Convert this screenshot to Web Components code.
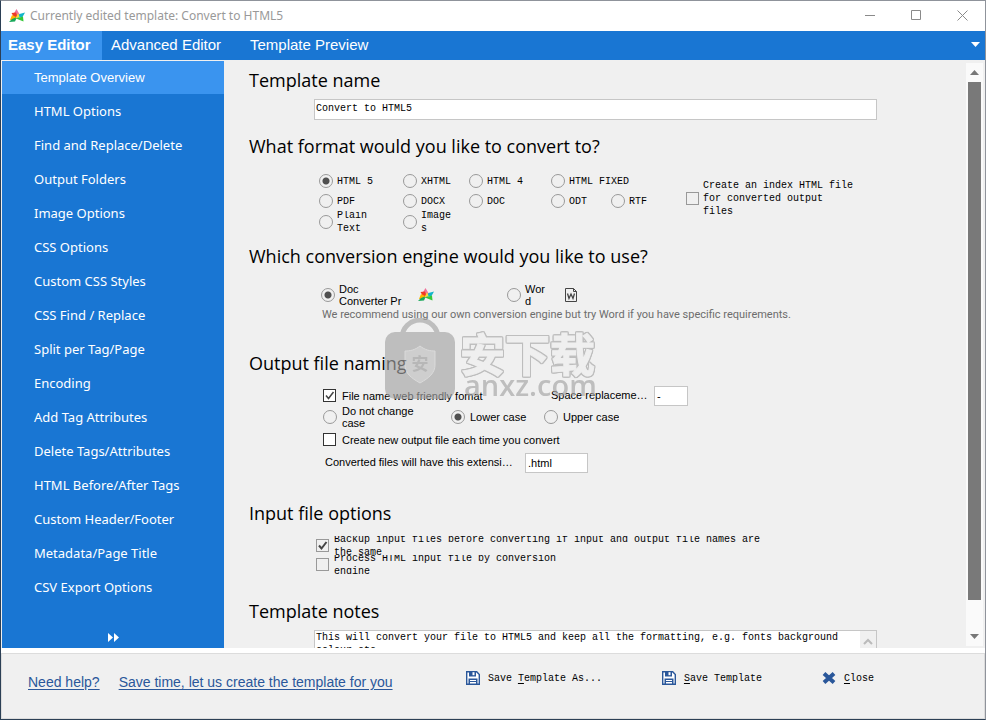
<!DOCTYPE html>
<html lang="en">
<head>
<meta charset="utf-8">
<meta name="viewport" content="width=device-width, initial-scale=1">
<title>Currently edited template: Convert to HTML5</title>
<style>
  html, body {
    height: 100%;
    margin: 0;
  }

  body {
    --color-blue: #1976d3;
    --color-blue-light: #3a94ef;
    --color-pane: #f0f0f0;
    --color-line: #c6c6c6;
    --font-ui: "Liberation Sans", Arial, sans-serif;
    --font-heading: "Open Sans", "Noto Sans", sans-serif;
    --font-nav: "Noto Sans", "Open Sans", sans-serif;
    --font-hint: Roboto, "Liberation Sans", sans-serif;
    --font-mono: "Liberation Mono", "Courier New", monospace;
    font-family: var(--font-ui);
    font-size: 11px;
    color: #000;
  }
</style>
</head>
<body>
<editor-window>
  <title-bar slot="title">Currently edited template: Convert to HTML5</title-bar>
  <tab-bar slot="tabs"></tab-bar>
  <side-nav slot="nav"></side-nav>
  <template-form slot="form"></template-form>
  <water-mark slot="overlay"></water-mark>
  <action-bar slot="footer"></action-bar>
</editor-window>

<script>
  function attach(element, html) {
    const template = document.createElement('template');
    template.innerHTML = html;
    element.attachShadow({ mode: 'open' }).appendChild(template.content.cloneNode(true));
  }

  class EditorWindow extends HTMLElement {
    constructor() {
      super();
      attach(this, `
        <style>
        :host {
          display: flex;
          flex-direction: column;
          box-sizing: border-box;
          height: 100vh;
          position: relative;
          overflow: hidden;
          background-color: #fff;
          border: 1px solid #2b3f55;
          border-top-color: #8f939b;
          border-right-color: #8f939b;
        }

        .main {
          display: flex;
          flex: 1;
          min-height: 0;
          padding: 1px 0 0 1px;
          margin-bottom: 5px;
          background-color: var(--color-pane);
        }
        </style>
        <slot name="title"></slot>
        <slot name="tabs"></slot>
        <div class="main">
          <slot name="nav"></slot>
          <slot name="form"></slot>
        </div>
        <slot name="footer"></slot>
        <slot name="overlay"></slot>
      `);
    }
  }

  class LogoMark extends HTMLElement {
    constructor() {
      super();
      attach(this, `
        <style>
        :host {
          display: block;
          flex: none;
          width: 16px;
          height: 14px;
        }

        svg {
          display: block;
        }
        </style>
        <svg width="16" height="14" viewBox="0 0 16 14" aria-hidden="true">
          <path d="M7.500 0 11 6 8 9 4.500 5z" fill="#f0709a"/>
          <path d="M2.500 4 7 3.500 9 9l-3 1z" fill="#ef3b24"/>
          <path d="M3 6 8 8.500 5.500 11 1 11z" fill="#ffb400"/>
          <path d="M0 13 3 10l5-2-2 4.500z" fill="#18a85a"/>
          <path d="M8 9 10.500 5 16 3.500 13.500 8z" fill="#12b5c9"/>
          <path d="M6.500 9.500 9 4 10.500 8z" fill="#f4e03a"/>
          <path d="M7 9.500 14 7.500 14.500 12.500z" fill="#35c838"/>
        </svg>
      `);
    }
  }

  class TitleBar extends HTMLElement {
    constructor() {
      super();
      attach(this, `
        <style>
        :host {
          display: flex;
          align-items: center;
          height: 30px;
          flex: none;
          padding-left: 8px;
          background-color: #fff;
          color: #999;
          font-family: var(--font-nav);
          font-size: 12px;
        }

        h1 {
          flex: 1;
          margin: 0 0 2px 5px;
          font: inherit;
        }

        button {
          width: 46px;
          height: 30px;
          padding: 0 0 2px;
          border: 0;
          background: none;
        }

        button:hover {
          background-color: #e5e5e5;
        }

        svg {
          display: block;
          margin: 0 auto;
          fill: none;
          stroke: #8a8a8a;
        }
        </style>
        <logo-mark></logo-mark>
        <h1><slot></slot></h1>
        <button aria-label="Minimize"><svg width="11" height="11"><path d="M0 5.500h10"/></svg></button>
        <button aria-label="Maximize"><svg width="11" height="11"><path d="M.5.5h9v9h-9z"/></svg></button>
        <button aria-label="Close window"><svg width="11" height="11"><path d="M.5.5l10 10M10.500.5l-10 10"/></svg></button>
      `);
    }
  }

  class TabBar extends HTMLElement {
    constructor() {
      super();
      attach(this, `
        <style>
        :host {
          display: flex;
          flex: none;
          height: 29px;
          background-color: var(--color-blue);
        }

        button {
          box-sizing: border-box;
          padding: 0 9px 2px;
          border: 0;
          background: none;
          color: #fff;
          font-family: var(--font-ui);
          font-size: 15px;
          text-align: left;
        }

        .selected {
          width: 101px;
          padding-left: 7px;
          background-color: var(--color-blue-light);
          font-weight: bold;
        }

        .advanced {
          width: 139px;
        }

        .more {
          display: flex;
          align-items: center;
          margin-left: auto;
          padding: 0 5px 2px;
        }
        </style>
        <button class="selected">Easy Editor</button>
        <button class="advanced">Advanced Editor</button>
        <button>Template Preview</button>
        <button class="more" aria-label="More tabs"><svg width="9" height="5"><path d="M0 0h9L4.500 5z" fill="#fff"/></svg></button>
      `);
    }
  }

  class SideNav extends HTMLElement {
    constructor() {
      super();
      const items = [
        'Template Overview', 'HTML Options', 'Find and Replace/Delete', 'Output Folders',
        'Image Options', 'CSS Options', 'Custom CSS Styles', 'CSS Find / Replace',
        'Split per Tag/Page', 'Encoding', 'Add Tag Attributes', 'Delete Tags/Attributes',
        'HTML Before/After Tags', 'Custom Header/Footer', 'Metadata/Page Title', 'CSV Export Options'
      ];
      attach(this, `
        <style>
        :host {
          display: flex;
          flex-direction: column;
          flex: none;
          width: 222px;
          background-color: var(--color-blue);
          font-family: var(--font-nav);
          font-size: 13px;
        }

        nav {
          flex: 1;
          min-height: 0;
          overflow: hidden;
        }

        a {
          display: block;
          height: 34px;
          line-height: 34px;
          padding-left: 32px;
          color: #fff;
          text-decoration: none;
        }

        a:first-child {
          height: 33px;
          line-height: 33px;
          background-color: var(--color-blue-light);
          font-family: var(--font-ui);
        }

        button {
          height: 22px;
          padding: 0;
          border: 0;
          background: none;
        }

        svg {
          display: block;
          margin: 0 auto;
        }
        </style>
        <nav>${items.map((item) => `<a href="#">${item}</a>`).join('')}</nav>
        <button aria-label="Expand"><svg width="11" height="9"><path d="M0 0l5 4.500L0 9zM6 0l5 4.500L6 9z" fill="#fff"/></svg></button>
      `);
    }
  }

  // A radio button or tick box with its label; long labels are clipped to the row.
  class ChoiceField extends HTMLElement {
    constructor() {
      super();
      const type = this.getAttribute('type') || 'radio';
      attach(this, `
        <style>
        :host {
          display: block;
          overflow: hidden;
        }

        label {
          display: flex;
          align-items: center;
          gap: var(--gap, 4px);
          height: 100%;
        }

        input {
          appearance: none;
          box-sizing: border-box;
          flex: none;
          width: 14px;
          height: 14px;
          margin: 0;
          border: 1px solid #999;
        }

        input[type="radio"] {
          border-radius: 50%;
        }

        input[type="radio"]:checked {
          background: radial-gradient(circle, #505050 3px, transparent 4px);
        }

        input[type="checkbox"] {
          width: 13px;
          height: 13px;
          border-color: var(--box-line, #999);
          background-color: var(--box-fill, transparent);
        }

        .field {
          display: grid;
          flex: none;
          align-items: center;
        }

        .field > * {
          grid-area: 1 / 1;
        }

        svg {
          display: none;
          pointer-events: none;
          fill: none;
          stroke: #444;
          stroke-width: var(--tick, 1.5);
        }

        input[type="checkbox"]:checked + svg {
          display: block;
        }

        .text {
          width: var(--text-width, auto);
          line-height: var(--line, 12px);
          overflow-wrap: anywhere;
        }
        </style>
        <label>
          <span class="field">
            <input type="${type}" name="${this.getAttribute('name') || 'option'}">
            <svg width="13" height="13" aria-hidden="true"><path d="M3 6.500 5.500 9.500 10.500 3"/></svg>
          </span>
          <span class="text"><slot></slot></span>
        </label>
      `);
      this.input = this.shadowRoot.querySelector('input');
      this.input.checked = this.hasAttribute('checked');
      this.input.addEventListener('change', () => this.clearOthers());
    }

    // Radios in separate shadow roots do not form a group by themselves.
    clearOthers() {
      if (this.input.type !== 'radio') return;
      this.getRootNode().querySelectorAll(`choice-field[name="${this.getAttribute('name')}"]`).forEach((other) => {
        if (other !== this) other.input.checked = false;
      });
    }
  }

  class FormSection extends HTMLElement {
    constructor() {
      super();
      attach(this, `
        <style>
        :host {
          display: block;
        }

        h2 {
          margin: 0 0 var(--heading-gap, 6px);
          font-family: var(--font-heading);
          font-size: 18px;
          font-weight: normal;
          line-height: 26px;
        }
        </style>
        <h2>${this.getAttribute('heading')}</h2>
        <slot></slot>
      `);
    }
  }

  class ScrollRail extends HTMLElement {
    constructor() {
      super();
      attach(this, `
        <style>
        :host {
          display: flex;
          flex-direction: column;
          flex: none;
          width: 17px;
          margin: 2px 2px 2px 0;
          background-color: #fafafa;
        }

        button {
          height: 19px;
          padding: 0;
          border: 0;
          background: none;
        }

        svg {
          display: block;
          margin: 0 auto;
          fill: #777;
        }

        .track {
          flex: 1;
          padding: 0 2px;
        }

        .thumb {
          height: 95%;
          background-color: #797979;
        }
        </style>
        <button aria-label="Scroll up"><svg width="9" height="5"><path d="M0 5h9L4.500 0z"/></svg></button>
        <div class="track"><div class="thumb"></div></div>
        <button aria-label="Scroll down"><svg width="9" height="5"><path d="M0 0h9L4.500 5z"/></svg></button>
      `);
    }
  }

  class TemplateForm extends HTMLElement {
    constructor() {
      super();
      attach(this, `
        <style>
        :host {
          display: flex;
          flex: 1;
          min-width: 0;
        }

        .pane {
          flex: 1;
          min-width: 0;
          overflow: hidden;
          padding: 6px 89px 0 25px;
        }

        form-section {
          padding-bottom: 13px;
        }

        .mono {
          font-family: var(--font-mono);
          font-size: 10px;
          --line: 13px;
        }

        input, textarea {
          box-sizing: border-box;
          border: 1px solid var(--color-line);
          background-color: #fff;
          color: #000;
          font-family: inherit;
          font-size: inherit;
        }

        .indent {
          display: flex;
          margin-left: 65px;
        }

        .name {
          flex: 1;
          min-width: 0;
          height: 21px;
          padding: 0 1px 3px;
        }

        .formats {
          --heading-gap: 12px;
          padding-bottom: 10px;
        }

        .format-grid {
          display: grid;
          grid-template-columns: 84px 66px 82px 60px 1fr;
          grid-template-rows: 20px 20px 22px;
          flex: 1;
          margin-left: 5px;
        }

        .wide {
          grid-column: span 2;
        }

        .index {
          --text-width: 154px;
          flex: none;
          align-self: flex-start;
          margin: 8px 20px 0 0;
        }

        .engine {
          --heading-gap: 15px;
          padding-bottom: 27px;
        }

        .engines {
          display: flex;
          align-items: center;
          height: 22px;
          margin-left: 72px;
        }

        .engines choice-field {
          height: 22px;
        }

        .engines logo-mark {
          margin: 0 73px 0 13px;
        }

        .engines svg {
          margin-left: 18px;
        }

        .hint {
          margin: 1px 0 0 73px;
          color: #6d6d6d;
          font-family: var(--font-hint);
          line-height: 16px;
          white-space: nowrap;
        }

        .naming {
          --heading-gap: 9px;
          --gap: 5px;
          padding-bottom: 27px;
        }

        .row {
          display: flex;
          align-items: center;
          height: 21px;
          margin-left: 74px;
        }

        .row choice-field {
          height: 100%;
        }

        .row.tall {
          height: 25px;
        }

        .dark {
          --box-line: #333;
          --box-fill: #fff;
          --gap: 6px;
        }

        .clip {
          padding-bottom: 2px;
          overflow: hidden;
          text-overflow: ellipsis;
          white-space: nowrap;
        }

        .row input {
          height: 20px;
          padding: 0 2px;
        }

        .inputs {
          --heading-gap: 10px;
          padding-bottom: 24px;
        }

        .checks {
          display: grid;
          grid-auto-rows: 19px;
          margin-left: 67px;
          --gap: 5px;
          --tick: 2;
        }

        .notes textarea {
          flex: 1;
          height: 60px;
          padding: 0 1px;
          border-right: 0;
          overflow: hidden;
          resize: none;
          line-height: 13px;
        }

        .notes button {
          display: flex;
          align-items: flex-start;
          width: 17px;
          padding: 6px 3px;
          border: 0;
          border-right: 1px solid var(--color-line);
          border-top: 1px solid var(--color-line);
          background-color: var(--color-pane);
        }

        .notes svg {
          fill: none;
          stroke: #bbb;
          stroke-width: 2;
        }
        </style>
        <div class="pane">
          <form-section heading="Template name">
            <div class="indent mono"><input class="name" aria-label="Template name" value="Convert to HTML5"></div>
          </form-section>

          <form-section class="formats" heading="What format would you like to convert to?">
            <div class="indent mono">
              <div class="format-grid">
                <choice-field name="format" checked>HTML 5</choice-field>
                <choice-field name="format">XHTML</choice-field>
                <choice-field name="format">HTML 4</choice-field>
                <choice-field name="format" class="wide">HTML FIXED</choice-field>
                <choice-field name="format">PDF</choice-field>
                <choice-field name="format">DOCX</choice-field>
                <choice-field name="format">DOC</choice-field>
                <choice-field name="format">ODT</choice-field>
                <choice-field name="format">RTF</choice-field>
                <choice-field name="format" style="--text-width: 36px">Plain Text</choice-field>
                <choice-field name="format" style="--text-width: 34px">Images</choice-field>
              </div>
              <choice-field type="checkbox" class="index">Create an index HTML file for converted output files</choice-field>
            </div>
          </form-section>

          <form-section class="engine" heading="Which conversion engine would you like to use?">
            <div class="engines">
              <choice-field name="engine" checked style="--text-width: 66px">Doc Converter Pr</choice-field>
              <logo-mark></logo-mark>
              <choice-field name="engine" style="--text-width: 22px">Word</choice-field>
              <svg width="12" height="14" viewBox="0 0 12 14" fill="none" stroke="#444" aria-hidden="true">
                <path d="M.5.5h8l3 3v10H.5zM8.500.5v3h3"/>
                <path d="M2.500 5.500l1.500 5 2-4.500 2 4.500 1.500-5" stroke-width="1.300"/>
              </svg>
            </div>
            <p class="hint">We recommend using our own conversion engine but try Word if you have specific requirements.</p>
          </form-section>

          <form-section class="naming" heading="Output file naming">
            <div class="row">
              <choice-field type="checkbox" class="dark" checked style="width: 228px">File name web friendly fomat</choice-field>
              <label class="clip" for="space" style="width: 98px">Space  replacement character</label>
              <input id="space" value="-" style="width: 34px; margin-left: 5px">
            </div>
            <div class="row">
              <choice-field name="case" style="--text-width: 90px; width: 128px">Do not change case</choice-field>
              <choice-field name="case" checked style="width: 93px">Lower case</choice-field>
              <choice-field name="case">Upper case</choice-field>
            </div>
            <div class="row tall">
              <choice-field type="checkbox" class="dark">Create new output file each time you convert</choice-field>
            </div>
            <div class="row">
              <label class="clip" for="extension" style="width: 190px; margin-left: 2px">Converted files will have this extension:</label>
              <input id="extension" value=".html" style="width: 63px; margin-left: 10px">
            </div>
          </form-section>

          <form-section class="inputs" heading="Input file options">
            <div class="checks mono">
              <choice-field type="checkbox" checked style="--text-width: 440px">Backup input files before converting if input and output file names are the same</choice-field>
              <choice-field type="checkbox" style="--text-width: 240px">Process HTML input file by conversion engine</choice-field>
            </div>
          </form-section>

          <form-section class="notes" heading="Template notes">
            <div class="indent mono">
              <textarea aria-label="Template notes">This will convert your file to HTML5 and keep all the formatting, e.g. fonts background colour etc.</textarea>
              <button aria-label="Scroll notes up"><svg width="10" height="8"><path d="M1 7l4-4 4 4"/></svg></button>
            </div>
          </form-section>
        </div>
        <scroll-rail></scroll-rail>
      `);
    }
  }

  class WaterMark extends HTMLElement {
    constructor() {
      super();
      attach(this, `
        <style>
        :host {
          display: flex;
          gap: 5px;
          position: absolute;
          top: 317px;
          left: 384px;
          opacity: 0.65;
          color: #a4a4a4;
          pointer-events: none;
        }

        .words {
          margin-top: 12px;
        }

        .title {
          font: bold 45px/46px "Noto Sans CJK SC", sans-serif;
          color: #efefef;
          -webkit-text-stroke: 1px #efefef;
          filter: drop-shadow(1px 0 #a4a4a4) drop-shadow(-1px 0 #a4a4a4) drop-shadow(0 1px #a4a4a4) drop-shadow(0 -1px #a4a4a4);
        }

        .site {
          font: 600 29px/28px "Open Sans", sans-serif;
          margin: -5px 0 0 4px;
        }
        </style>
        <svg width="70" height="82" viewBox="0 0 70 82" aria-hidden="true">
          <path d="M17 20a18 18 0 0 1 36 0" fill="none" stroke="#a4a4a4" stroke-width="5"/>
          <rect y="14" width="70" height="67" rx="10" fill="#a4a4a4"/>
          <path d="M35 28c5 4 10 5 15 5v14c0 8-6 13-15 18-9-5-15-10-15-18V33c5 0 10-1 15-5z" fill="#bdbdbd" stroke="#d0d0d0"/>
          <text x="35" y="52" text-anchor="middle" font-family="Noto Sans CJK SC, sans-serif" font-size="17" font-weight="bold" fill="#9a9a9a">安</text>
        </svg>
        <div class="words">
          <div class="title">安下载</div>
          <div class="site">anxz.com</div>
        </div>
      `);
    }
  }

  class ActionBar extends HTMLElement {
    constructor() {
      super();
      const disk = `
        <svg width="14" height="14" viewBox="0 0 14 14" aria-hidden="true">
          <path d="M.7.7h10L13.300 3.500v9.800H.7z" fill="#fff" stroke="#2a579a" stroke-width="1.400"/>
          <path d="M3 0h7v5.500H3z" fill="#2a579a"/>
          <path d="M6.500 1.200h2v3h-2z" fill="#fff"/>
          <path d="M2.500 7.500h9v5.500h-9z" fill="#2a579a"/>
          <path d="M4 9h6v1H4zM4 11h6v1.500H4z" fill="#fff"/>
        </svg>`;
      attach(this, `
        <style>
        :host {
          display: flex;
          flex: none;
          box-sizing: border-box;
          height: 66px;
          padding: 0 110px 0 26px;
          border: 1px solid #dcdcdc;
          background-color: var(--color-pane);
        }

        .links {
          display: flex;
          gap: 19px;
          padding-top: 19px;
          flex: 1;
          font-size: 14px;
          line-height: 18px;
          white-space: nowrap;
        }

        a {
          color: #2a579a;
          text-underline-offset: 2px;
        }

        .buttons {
          display: flex;
          gap: 60px;
          align-items: flex-start;
          padding-top: 15px;
        }

        button {
          display: flex;
          align-items: center;
          gap: 8px;
          height: 18px;
          padding: 0;
          border: 0;
          background: none;
          color: #000;
          font-family: var(--font-mono);
          font-size: 10px;
          white-space: pre;
        }

        u {
          text-underline-offset: 2px;
        }
        </style>
        <div class="links">
          <a href="#">Need help?</a>
          <a href="#">Save time, let us create the template for you</a>
        </div>
        <div class="buttons">
          <button>${disk}<span>Save <u>T</u>emplate As...</span></button>
          <button>${disk}<span><u>S</u>ave Template</span></button>
          <button><svg width="14" height="14" viewBox="0 0 14 14" aria-hidden="true"><path d="M2 2.500l10 9M12 2.500l-10 9" stroke="#2a579a" stroke-width="4"/></svg><span><u>C</u>lose</span></button>
        </div>
      `);
    }
  }

  customElements.define('logo-mark', LogoMark);
  customElements.define('choice-field', ChoiceField);
  customElements.define('form-section', FormSection);
  customElements.define('scroll-rail', ScrollRail);
  customElements.define('title-bar', TitleBar);
  customElements.define('tab-bar', TabBar);
  customElements.define('side-nav', SideNav);
  customElements.define('template-form', TemplateForm);
  customElements.define('water-mark', WaterMark);
  customElements.define('action-bar', ActionBar);
  customElements.define('editor-window', EditorWindow);
</script>
</body>
</html>
